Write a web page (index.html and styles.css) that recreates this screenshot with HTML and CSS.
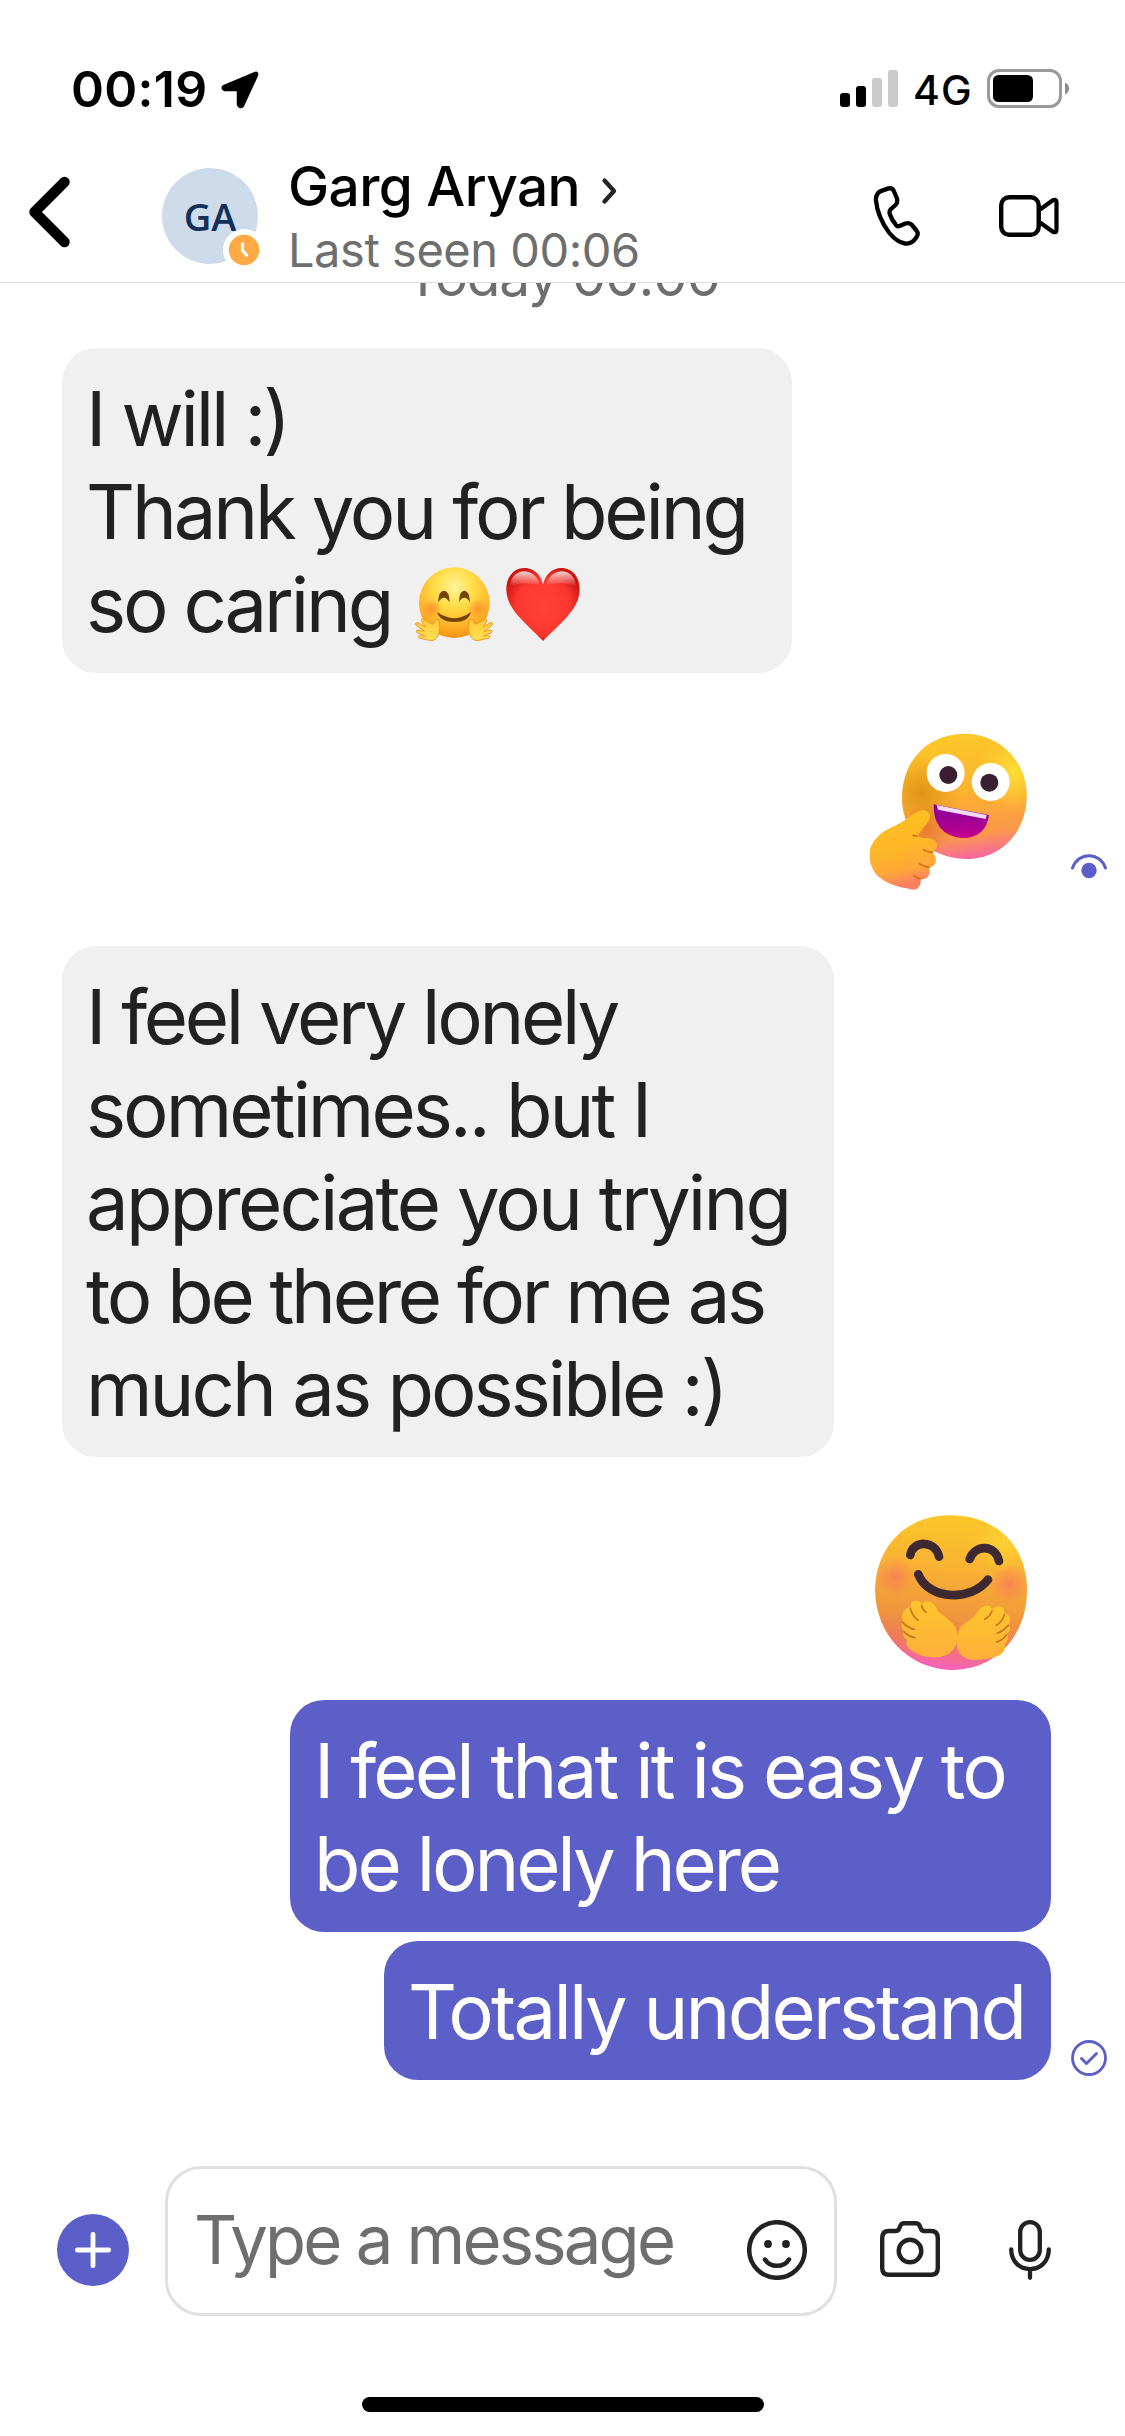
FILE: index.html
```html
<!DOCTYPE html>
<html lang="en">
<head>
<meta charset="utf-8">
<title>Garg Aryan</title>
<link rel="stylesheet" href="styles.css">
</head>
<body>
<div class="phone">
  <div class="status-bar">
    <div class="clock">00:19</div>
    <svg class="location" width="40" height="42" viewBox="0 0 40 42"><path d="M35 4.500 4 17.500Q2 19.500 5 20.500H18.500V35.500Q20 39 22.500 36.500L36.500 6Q37 3.500 35 4.500Z" fill="#000" stroke="#000" stroke-width="3.500" stroke-linejoin="round"/></svg>
    <svg class="signal" width="58" height="37" viewBox="0 0 58 37"><rect y="23" width="10" height="14" rx="3"/><rect x="16" y="16" width="10" height="21" rx="3"/><rect x="32" y="8" width="10" height="29" rx="3" fill="#cbcbcb"/><rect x="48" width="10" height="37" rx="3" fill="#cbcbcb"/></svg>
    <div class="network">4G</div>
    <svg class="battery" width="83" height="39" viewBox="0 0 83 39"><rect x="1.500" y="1.500" width="72" height="36" rx="10.500" fill="none" stroke="#999" stroke-width="3"/><rect x="6" y="6" width="40" height="27" rx="5.500"/><path d="M78 13.500Q82 15.500 82 19.500T78 25.500Z" fill="#8c8c8c"/></svg>
  </div>

  <header class="chat-header">
    <svg class="back" width="44" height="74" viewBox="0 0 44 74"><path d="M37.500 7 7.500 37 37.500 67" fill="none" stroke="#000" stroke-width="10.500" stroke-linecap="round" stroke-linejoin="round"/></svg>
    <div class="avatar">GA
      <svg class="presence" width="42" height="42" viewBox="0 0 42 42"><circle cx="21" cy="21" r="21" fill="#fff"/><circle cx="21" cy="21" r="15.200" fill="#ffaa44"/><path d="M19.500 15v6.500l4 4.500" fill="none" stroke="#fff" stroke-width="3.200" stroke-linecap="round" stroke-linejoin="round"/></svg>
    </div>
    <div class="contact">
      <div class="name">Garg Aryan<svg class="more" width="18" height="28" viewBox="0 0 18 28"><path d="M3.500 3.500 13 14 3.500 24.500" fill="none" stroke="#242424" stroke-width="4.300" stroke-linecap="round" stroke-linejoin="round"/></svg></div>
      <div class="seen">Last seen 00:06</div>
    </div>
    <svg class="call" width="50" height="64" viewBox="871 184 50 64"><path d="M885 189.600 888.500 188.400Q892.300 187.500 893.800 191L897 198.500Q898 202.500 895.500 205L890.500 209.500Q889 211.500 889.800 214 891.500 219.500 896 225 897.200 226.800 899.500 226L905.500 223.500Q909 222.300 911.500 224.500L916.500 230.500Q919 234 916.300 237.500 911.500 244.500 905 243.500 897 242.500 889 232.500 877.500 217 875.900 200 875.800 192.500 882 190.600Z" fill="none" stroke="#000" stroke-width="4.300" stroke-linejoin="round"/></svg>
    <svg class="video" width="62" height="44" viewBox="0 0 62 44"><rect x="3.200" y="3.200" width="37.500" height="37.600" rx="8" fill="none" stroke="#000" stroke-width="4.400"/><path d="M42 15.500 54.500 6.500Q58.500 4.500 58.500 8V36Q58.500 39.500 54.500 37.500L42 28.500" fill="none" stroke="#000" stroke-width="4.200" stroke-linejoin="round"/></svg>
  </header>

  <main class="thread">
    <div class="day">Today 00:00</div>

    <div class="bubble received first">
      <div class="line ls-c">I will :)</div>
      <div class="line ls-c">Thank you for being</div>
      <div class="line ls-c">so caring<svg class="hug" width="82" height="78" viewBox="36 45 246 234" role="img" aria-label="hugging face">
        <defs>
          <radialGradient id="hugFace" cx=".5" cy=".28" r=".72"><stop offset="0" stop-color="#fff59a"/><stop offset=".4" stop-color="#ffdc45"/><stop offset=".8" stop-color="#fcae27"/><stop offset="1" stop-color="#f49212"/></radialGradient>
          <radialGradient id="hugBlush"><stop offset="0" stop-color="#ff7a25" stop-opacity=".65"/><stop offset="1" stop-color="#ff7a25" stop-opacity="0"/></radialGradient>
          <linearGradient id="hugHand" x2="0" y2="1"><stop offset="0" stop-color="#ffc934"/><stop offset="1" stop-color="#ffdf55"/></linearGradient>
        </defs>
        <circle cx="160" cy="158" r="106" fill="url(#hugFace)"/>
        <circle cx="92" cy="176" r="30" fill="url(#hugBlush)"/><circle cx="230" cy="176" r="30" fill="url(#hugBlush)"/>
        <path d="M111 157Q113 122 129 122T146 157Q138 143 129 143T111 157ZM174 157Q175 122 190 122T207 157Q200 143 190 143T174 157Z" fill="#764400"/>
        <path d="M108 186Q160 223 210 186 203 216 160 216T108 186Z" fill="#764400"/>
        <g id="hugPalm"><path d="M105 208Q113 205 115 216 120 252 103 268 94 275 80 270L54 264Q48 259 56 257L72 258 48 248Q42 242 50 240L70 244 46 226Q41 219 49 217L73 231 61 212Q62 202 70 209L92 222Q101 224 101 213Z" fill="url(#hugHand)" stroke="#ef9a28" stroke-width="3"/></g>
        <use href="#hugPalm" transform="matrix(-1 0 0 1 319 0)"/>
      </svg><svg class="heart" width="78" height="78" viewBox="312 45 234 234" role="img" aria-label="red heart">
        <defs>
          <radialGradient id="heartFill" cx=".5" cy=".52" r=".56"><stop offset="0" stop-color="#ff4238"/><stop offset=".65" stop-color="#fb382f"/><stop offset="1" stop-color="#cf1510"/></radialGradient>
          <linearGradient id="heartShine" x2="0" y2="1"><stop offset="0" stop-color="#fff" stop-opacity=".8"/><stop offset="1" stop-color="#fff" stop-opacity="0"/></linearGradient>
        </defs>
        <path d="M429 103C422 73 401 54 374 54 340 54 319 82 319 117 319 176 370 213 429 273 488 213 539 176 539 117 539 82 518 54 484 54 457 54 436 73 429 103Z" fill="url(#heartFill)"/>
        <path d="M330 108Q336 65 374 64 409 66 421 108 378 92 330 108ZM437 108Q449 66 484 64 522 65 528 108 480 92 437 108Z" fill="url(#heartShine)"/>
      </svg></div>
    </div>

    <div class="sent-row thumbs-row">
      <svg width="165" height="163" viewBox="45 60 495 489" role="img" aria-label="happy thumbs up">
        <defs>
          <linearGradient id="joyFace" x1=".35" y1="0" x2=".5" y2="1"><stop offset="0" stop-color="#fdc928"/><stop offset=".5" stop-color="#fbb12f"/><stop offset=".82" stop-color="#fb984a"/><stop offset="1" stop-color="#f768a0"/></linearGradient>
          <radialGradient id="joyGlow"><stop offset="0" stop-color="#ffdf38"/><stop offset="1" stop-color="#ffd030" stop-opacity="0"/></radialGradient>
          <radialGradient id="joyShade"><stop offset="0" stop-color="#d68a10" stop-opacity=".75"/><stop offset="1" stop-color="#d68a10" stop-opacity="0"/></radialGradient>
          <linearGradient id="joyHand" x2="0.2" y2="1"><stop offset="0" stop-color="#fdc41f"/><stop offset=".55" stop-color="#fdb628"/><stop offset=".82" stop-color="#ffa738"/><stop offset="1" stop-color="#fb8060"/></linearGradient>
          <radialGradient id="joyCast"><stop offset="0" stop-color="#e0722a" stop-opacity=".75"/><stop offset="1" stop-color="#e0722a" stop-opacity="0"/></radialGradient>
          <linearGradient id="joyMouth" x2="0" y2="1"><stop offset="0" stop-color="#82009c"/><stop offset="1" stop-color="#c4008c"/></linearGradient>
          <clipPath id="joyClip"><path id="joyHead" d="M345 71C440 71 528 145 530 255 531 365 455 446 350 447 245 446 155 375 156 262 158 145 238 71 345 71Z"/></clipPath>
        </defs>
        <use href="#joyHead" fill="url(#joyFace)"/>
        <g clip-path="url(#joyClip)"><circle cx="490" cy="185" r="120" fill="url(#joyGlow)"/><circle cx="215" cy="250" r="115" fill="url(#joyShade)"/><circle cx="228" cy="358" r="80" fill="url(#joyCast)"/></g>
        <circle cx="287" cy="189" r="57" fill="#fff"/><circle cx="422" cy="216" r="57" fill="#fff"/>
        <circle cx="295" cy="195" r="27" fill="#3a1f30"/><circle cx="418" cy="218" r="27" fill="#3a1f30"/>
        <path d="M251 283 417 315Q407 385 335 384 249 375 251 283Z" fill="url(#joyMouth)"/>
        <path d="M260 285 410 315 407 327 264 299Z" fill="#f2d9f7"/>
        <path d="M203 305Q230 293 240 314 241 332 222 351L202 378Q214 386 232 384 259 387 261 405 260 421 248 427 263 444 255 461 248 472 237 472 243 491 232 502 222 510 212 507 215 526 200 537 191 541 177 536 118 529 83 498 50 462 62 411 80 371 125 352 159 337 181 318Q190 310 203 305Z" fill="url(#joyHand)"/>
        <path d="M202 378Q196 378 189 376M248 427Q231 427 220 419M237 472Q221 471 208 461M212 507Q202 506 191 497" fill="none" stroke="#d9701c" stroke-width="5" stroke-linecap="round"/>
      </svg>
      <svg class="receipt" width="36" height="25" viewBox="0 0 36 25"><path d="M1.500 14C7-2.500 29-2.500 34.500 14" fill="none" stroke="#5b5fc7" stroke-width="3" stroke-linecap="round"/><circle cx="18" cy="16.500" r="7.700" fill="#5b5fc7"/></svg>
    </div>

    <div class="bubble received second">
      <div class="line ls-d">I feel very lonely</div>
      <div class="line ls-b">sometimes.. but I</div>
      <div class="line ls-a">appreciate you trying</div>
      <div class="line ls-d">to be there for me as</div>
      <div class="line ls-b">much as possible :)</div>
    </div>

    <div class="sent-row hug-row">
      <svg width="160" height="162" viewBox="60 36 480 486" role="img" aria-label="hug">
        <defs>
          <linearGradient id="warmFace" x1=".55" y1="0" x2=".45" y2="1"><stop offset="0" stop-color="#fcc728"/><stop offset=".35" stop-color="#f9b233"/><stop offset=".65" stop-color="#ef963d"/><stop offset=".82" stop-color="#ee7b58"/><stop offset="1" stop-color="#f760c4"/></linearGradient>
          <radialGradient id="warmGlow"><stop offset="0" stop-color="#ffcf35"/><stop offset="1" stop-color="#ffcf35" stop-opacity="0"/></radialGradient>
          <radialGradient id="warmBlush"><stop offset="0" stop-color="#f9785c" stop-opacity=".75"/><stop offset="1" stop-color="#f9785c" stop-opacity="0"/></radialGradient>
          <linearGradient id="warmHand" x2="0" y2="1"><stop offset="0" stop-color="#fdc52c"/><stop offset="1" stop-color="#ffb03a"/></linearGradient>
          <clipPath id="warmClip"><path id="warmHead" d="M300 46C432 46 528 130 531 265 533 410 435 510 305 510 175 507 77 405 75 270 77 140 168 46 300 46Z"/></clipPath>
        </defs>
        <use href="#warmHead" fill="url(#warmFace)"/>
        <g clip-path="url(#warmClip)"><circle cx="460" cy="130" r="90" fill="url(#warmGlow)"/><circle cx="135" cy="230" r="62" fill="url(#warmBlush)"/><circle cx="478" cy="252" r="62" fill="url(#warmBlush)"/></g>
        <path d="M181 165C187 121 256 119 267 170M359 177C375 134 435 131 447 183M205 223C236 301 364 305 414 239" fill="none" stroke="#3f2931" stroke-width="26" stroke-linecap="round"/>
        <path d="M164 330Q175 319 181 323 180 304 198 302 211 301 215 315 220 302 235 304 253 308 263 332L309 371Q329 396 320 430 306 470 259 472 216 474 187 453 163 439 171 420 155 410 161 391 151 382 158 365 152 343 164 330Z" fill="url(#warmHand)"/>
        <path d="M474 344Q465 338 463 340 465 321 448 319 432 320 426 331 424 313 406 317 389 322 372 350L333 379Q318 402 321 437 325 475 372 480 423 478 450 465 470 452 464 433 479 419 471 402 485 389 478 372 484 353 474 344Z" fill="url(#warmHand)"/>
        <path d="M181 325Q185 345 204 361M215 317Q216 327 228 337M158 367Q173 383 193 388M162 395Q175 410 195 413M463 344Q458 364 439 376M426 333Q420 350 404 358M475 376Q460 393 442 400M469 405Q457 421 440 426" fill="none" stroke="#c8751f" stroke-width="5" stroke-linecap="round"/>
      </svg>
    </div>

    <div class="bubble sent third">
      <div class="line ls-a">I feel that it is easy to</div>
      <div class="line ls-c">be lonely here</div>
    </div>
    <div class="sent-row last-row">
      <div class="bubble sent fourth"><div class="line ls-a">Totally understand</div></div>
      <svg class="receipt" width="36" height="36" viewBox="0 0 36 36"><circle cx="18" cy="18" r="16.500" fill="none" stroke="#5b5fc7" stroke-width="2.800"/><path d="M10.500 18.500 15.500 23.500 25.500 13.500" fill="none" stroke="#5b5fc7" stroke-width="2.900" stroke-linecap="round" stroke-linejoin="round"/></svg>
    </div>
  </main>

  <footer class="composer">
    <svg class="add" width="72" height="72" viewBox="0 0 72 72"><circle cx="36" cy="36" r="36" fill="#5b5fc7"/><path d="M36 20.300V51.700M20.300 36H51.700" stroke="#fff" stroke-width="4.800" stroke-linecap="round"/></svg>
    <div class="field">
      <div class="placeholder">Type a message</div>
      <svg width="60" height="60" viewBox="0 0 60 60"><circle cx="30" cy="30" r="27.800" fill="none" stroke="#212121" stroke-width="4.500"/><circle cx="21" cy="24" r="3.900" fill="#212121"/><circle cx="39" cy="24" r="3.900" fill="#212121"/><path d="M18 39.500Q22 45.800 30 45.800T42 39.500" fill="none" stroke="#212121" stroke-width="4.500" stroke-linecap="round"/></svg>
    </div>
    <svg class="camera" width="60" height="60" viewBox="0 -2 60 60" fill="none" stroke="#212121" stroke-width="4.400" stroke-linejoin="round"><path d="M9 10H15.500Q18 10 19 8L20.500 4.500Q21.500 2.200 24 2.200H36Q38.500 2.200 39.500 4.500L41 8Q42 10 44.500 10H51Q57.800 10 57.800 17V47Q57.800 53.800 51 53.800H9Q2.200 53.800 2.200 47V17Q2.200 10 9 10Z"/><circle cx="30" cy="30" r="11.300"/></svg>
    <svg class="mic" width="42" height="60" viewBox="0 0 42 60" fill="none" stroke="#212121" stroke-width="4.300" stroke-linecap="round"><rect x="11.200" y="2.200" width="19.600" height="37.600" rx="9.800"/><path d="M2.200 29.300C2.200 55.700 39.800 55.700 39.800 29.300M21 50V57.800"/></svg>
  </footer>
  <div class="home-indicator"></div>
</div>
</body>
</html>
```
FILE: styles.css
```css
* { box-sizing: border-box; }
body { margin: 0; background: #fff; font-family: Inter, "Liberation Sans", sans-serif; color: #212121; }
svg { display: block; flex: none; }

.phone { display: flex; flex-direction: column; width: 1125px; height: 2436px; overflow: hidden; }

/* status bar */
.status-bar { display: flex; height: 140px; padding: 59px 55px 0 71px; color: #000; white-space: nowrap; }
.clock { width: 149px; font-size: 50px; font-weight: 560; line-height: 60px; letter-spacing: .3px; }
.location { margin-top: 10px; }
.signal { margin: 11px 15px 0 auto; }
.network { width: 74px; margin-top: 1px; font-size: 41px; font-weight: 500; line-height: 60px; letter-spacing: 1px; }
.battery { margin-top: 10px; }

/* header */
.chat-header { display: flex; height: 143px; padding-left: 27px; border-bottom: 1px solid #dedede; white-space: nowrap; }
.back { margin-top: 35px; }
.avatar { position: relative; width: 96px; height: 96px; margin: 28px 30px 0 91px; border-radius: 50%; background: #cedbea; color: #12305a; font: 600 38px/96px "Open Sans", sans-serif; text-align: center; }
.presence { position: absolute; left: 61px; top: 61px; }
.contact { width: 585px; margin-top: 13px; }
.name { display: flex; font-size: 55px; font-weight: 500; line-height: 66px; letter-spacing: -.6px; color: #000; }
.more { margin: 24px 0 0 21px; }
.seen { margin-top: 3px; font-size: 47px; line-height: 56px; letter-spacing: -.46px; color: #6e6e6e; }
.call { margin: 44px 77px 0 -2px; }
.video { margin-top: 54px; }

/* thread */
.thread { display: flex; flex-direction: column; height: 1863px; overflow: hidden; }
.day { flex: none; height: 60px; margin-top: -37px; text-align: center; font-size: 55px; line-height: 60px; letter-spacing: -1.3px; color: #6e6e6e; }
.bubble { flex: none; padding: 24px 0 22px 24px; border-radius: 34px; }
.line { display: flex; height: 93px; font-size: 76px; line-height: 93px; white-space: nowrap; }
.ls-a { letter-spacing: -2.8px; }
.ls-b { letter-spacing: -3px; }
.ls-c { letter-spacing: -3.16px; }
.ls-d { letter-spacing: -3.29px; }
.received { align-self: flex-start; margin-left: 62px; background: #f0f0f0; }
.sent { align-self: flex-end; background: #5b5fc7; color: #fff; }
.first { width: 730px; height: 325px; margin-top: 42px; }
.second { width: 772px; height: 511px; margin-top: 53px; }
.third { width: 761px; height: 232px; margin: 26px 74px 0 0; }
.fourth { width: 667px; height: 139px; }
.hug { margin: 7px 9px 0 22px; }
.heart { margin-top: 7px; }
.sent-row { flex: none; display: flex; justify-content: flex-end; align-items: flex-end; padding-right: 18px; }
.thumbs-row { margin-top: 57px; }
.thumbs-row .receipt { margin: 0 0 14px 41px; }
.hug-row { margin-top: 55px; padding-right: 95px; }
.last-row { margin-top: 9px; }
.last-row .receipt { margin: 0 0 4px 20px; }

/* composer */
.composer { display: flex; height: 251px; padding: 20px 0 0 57px; }
.add { margin: 48px 36px 0 0; }
.field { display: flex; width: 672px; height: 150px; padding: 49px 27px 0 26px; border: 3px solid #e0e0e0; border-radius: 36px; }
.placeholder { flex: 1; margin-top: -20px; font-size: 67px; line-height: 84px; letter-spacing: -2.8px; white-space: nowrap; color: #6e6e6e; }
.field svg { margin-top: 2px; }
.camera { margin: 53px 69px 0 43px; }
.mic { margin-top: 54px; }

.home-indicator { width: 402px; height: 15px; margin-left: 362px; border-radius: 8px; background: #000; }
```
